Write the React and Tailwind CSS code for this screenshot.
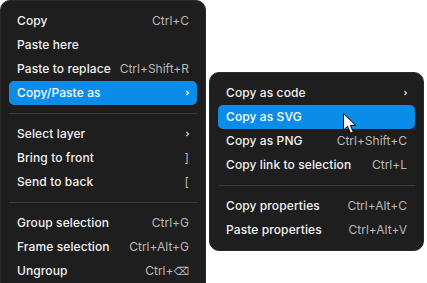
import React from "react";

const font = { fontFamily: "Inter, 'Noto Sans', sans-serif" };

function Item({ label, shortcut, chevron, active }) {
  return (
    <div
      className={`flex h-6 items-center justify-between rounded-[5px] px-2 text-[12px] ${
        active ? "bg-[#0c8ce9] text-white" : "text-[#f2f2f2]"
      }`}
    >
      <span className="font-medium tracking-[0.1px]">{label}</span>
      {chevron ? (
        <svg width="6" height="8" viewBox="0 0 6 8" className="-mr-[1px]">
          <path d="M2.5 2 L4.5 4 L2.5 6" fill="none" stroke={active ? "#fff" : "#cfcfcf"} strokeWidth="1.2" />
        </svg>
      ) : shortcut ? (
        <span className={active ? "text-white" : "text-[#b8b8b8]"}>{shortcut}</span>
      ) : null}
    </div>
  );
}

function Sep() {
  return <div className="my-2 h-px bg-[#3a3a3a]" />;
}

export default function App() {
  return (
    <div className="relative h-[283px] w-[427px] overflow-hidden bg-white" style={font}>
      <div className="flex items-start gap-[3px]">
        <div className="h-[300px] w-[206px] shrink-0 rounded-[10px] border border-[#2a2a2a] bg-[#1e1e1e] p-2">
          <Item label="Copy" shortcut="Ctrl+C" />
          <Item label="Paste here" />
          <Item label="Paste to replace" shortcut="Ctrl+Shift+R" />
          <Item label="Copy/Paste as" chevron active />
          <Sep />
          <Item label="Select layer" chevron />
          <Item label="Bring to front" shortcut="]" />
          <Item label="Send to back" shortcut="[" />
          <Sep />
          <Item label="Group selection" shortcut="Ctrl+G" />
          <Item label="Frame selection" shortcut="Ctrl+Alt+G" />
          <Item label="Ungroup" shortcut={<>Ctrl+<span style={{ fontFamily: "'DejaVu Sans', sans-serif", fontSize: "11px" }}>⌫</span></>} />
        </div>
        <div className="mt-[72px] w-[215px] shrink-0 rounded-[10px] border border-[#2a2a2a] bg-[#1e1e1e] p-2">
          <Item label="Copy as code" chevron />
          <Item label="Copy as SVG" active />
          <Item label="Copy as PNG" shortcut="Ctrl+Shift+C" />
          <Item label="Copy link to selection" shortcut="Ctrl+L" />
          <Sep />
          <Item label="Copy properties" shortcut="Ctrl+Alt+C" />
          <Item label="Paste properties" shortcut="Ctrl+Alt+V" />
        </div>
      </div>
      <svg
        className="absolute left-[342px] top-[112px]"
        width="18"
        height="24"
        viewBox="0 0 18 24"
      >
        <path
          d="M1.5 1.5 L1.5 18 L5.5 14.3 L8.5 21.2 L11.3 20 L8.4 13.4 L13.8 13.4 Z"
          fill="#fff"
          stroke="#000"
          strokeWidth="1"
          strokeLinejoin="round"
        />
      </svg>
    </div>
  );
}
